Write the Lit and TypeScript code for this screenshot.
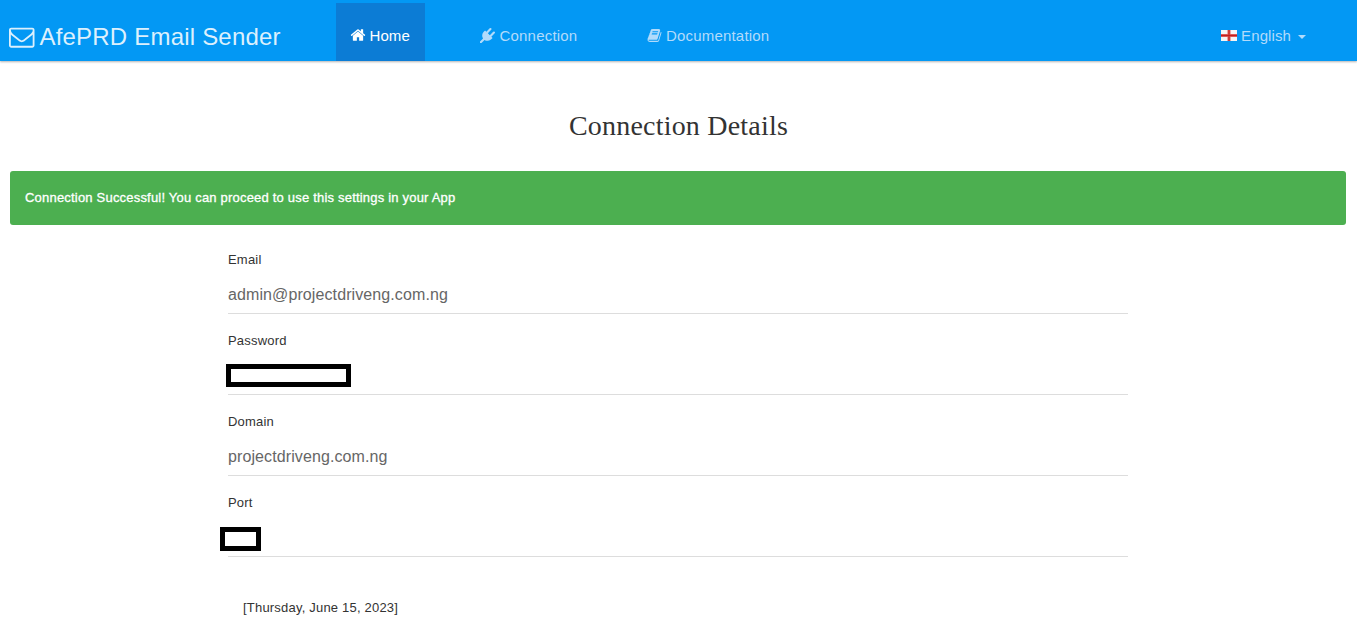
import { LitElement, html, css, svg } from "lit";
import { customElement } from "lit/decorators.js";

const icons = {
  mail: "M1664 1504v-768q-32 36-69 66-268 206-426 338-51 43-83 67t-86.5 48.5-102.5 24.5h-2q-48 0-102.5-24.5t-86.5-48.5-83-67q-158-132-426-338-37-30-69-66v768q0 13 9.5 22.5t22.5 9.5h1472q13 0 22.5-9.5t9.5-22.5zm0-1051v-24.5l-.5-13-3-12.5-5.5-9-9-7.5-14-2.5h-1472q-13 0-22.5 9.5t-9.5 22.5q0 168 147 284 193 152 401 317 6 5 35 29.5t46 37.5 44.5 31.5 50.5 27.5 43 9h2q20 0 43-9t50.5-27.5 44.5-31.5 46-37.5 35-29.5q208-165 401-317 54-43 100.5-115.5t46.5-131.5zm128-37v1088q0 66-47 113t-113 47h-1472q-66 0-113-47t-47-113v-1088q0-66 47-113t113-47h1472q66 0 113 47t47 113z",
  home: "M1472 992v480q0 26-19 45t-45 19h-384v-384h-256v384h-384q-26 0-45-19t-19-45v-480q0-1 .5-3t.5-3l575-474 575 474q1 2 1 6zm223-69l-62 74q-8 9-21 11h-3q-13 0-21-7l-692-577-692 577q-12 8-24 7-13-2-21-11l-62-74q-8-10-7-23.5t11-21.5l719-599q32-26 76-26t76 26l244 204v-195q0-14 9-23t23-9h192q14 0 23 9t9 23v408l219 182q10 8 11 21.5t-7 23.5z",
  plug: "M1755 453q37 38 37 90.5t-37 90.5l-401 400 150 150-160 160q-163 163-389.5 186.5t-411.5-100.5l-362 362h-181v-181l362-362q-124-185-100.5-411.5t186.5-389.5l160-160 150 150 400-401q38-37 91-37t90 37 37 90.5-37 90.5l-400 401 234 234 401-400q38-37 91-37t90 37z",
  book: "M1703 478q40 57 18 129l-275 906q-19 64-76.5 107.5t-122.5 43.5h-923q-77 0-148.5-53.5t-99.5-131.5q-24-67-2-127 0-4 3-27t4-37q1-8-3-21.5t-3-19.5q2-11 8-21t16.5-23.5 16.5-23.5q23-38 45-91.5t30-91.5q3-10 .5-30t-.5-28q3-11 17-28t17-23q21-36 42-92t25-90q1-9-2.5-32t.5-28q4-13 22-30.5t22-22.5q19-26 42.5-84.5t27.5-96.5q1-8-3-25.5t-2-26.5q2-8 9-18t18-23 17-21q8-12 16.5-30.5t15-35 16-36 19.5-32 26.5-23.5 36-11.5 47.5 5.5l-1 3q38-9 51-9h761q74 0 114 56t18 130l-274 906q-36 119-71.5 153.5t-128.5 34.5h-869q-27 0-38 15-11 16-1 43 24 70 144 70h923q29 0 56-15.5t35-41.5l300-987q7-22 5-57 38 15 59 43zm-1064 2q-4 13 2 22.5t20 9.5h608q13 0 25.5-9.5t16.5-22.5l21-64q4-13-2-22.5t-20-9.5h-608q-13 0-25.5 9.5t-16.5 22.5zm-83 256q-4 13 2 22.5t20 9.5h608q13 0 25.5-9.5t16.5-22.5l21-64q4-13-2-22.5t-20-9.5h-608q-13 0-25.5 9.5t-16.5 22.5z",
};

const icon = (name: keyof typeof icons) =>
  html`<svg class="icon ${name}" viewBox="0 0 1792 1792">${svg`<path d=${icons[name]} />`}</svg>`;

@customElement("app-root")
export class AppRoot extends LitElement {
  static styles = css`
    :host {
      display: block;
      height: 630px;
      overflow: hidden;
      background: #fff;
      color: #333;
      font: 13px/24px "Liberation Sans", Arial, sans-serif;
      letter-spacing: 0.2px;
    }
    * { box-sizing: border-box; }
    .navbar {
      display: flex;
      height: 61px;
      padding-top: 3px;
      background: #0398f4;
      box-shadow: 0 1px 2px rgba(0, 0, 0, 0.3);
      color: #b2dbfb;
      font-size: 15px;
      line-height: 23px;
    }
    .brand {
      display: flex;
      align-items: center;
      width: 336px;
      padding: 9px 0 0 9px;
      color: #dcf0fd;
      font-size: 24px;
    }
    .link {
      display: flex;
      align-items: center;
      padding: 6px 15px 0;
      white-space: nowrap;
    }
    .link.active { background: #0c7cd5; color: #fff; width: 89px; padding-left: 14px; letter-spacing: 0.1px; }
    .link.active .icon { width: 16px; height: 16px; margin-right: 3.5px; }
    .link.connection { margin-left: 40px; }
    .link.documentation { margin-left: 40px; }
    .link.documentation .icon { margin-right: 3.5px; }
    .link.language { margin-left: auto; margin-right: 36px; letter-spacing: 0.1px; }
    .icon { flex: none; fill: currentColor; width: 15px; height: 15px; margin-right: 4.5px; }
    .icon.mail { width: 25.5px; height: 25.5px; margin: 0 5px 0 0; }
    .flag { flex: none; width: 16px; height: 11px; margin-right: 4px; }
    .caret {
      margin: 3px 0 0 7px;
      border-top: 4px solid;
      border-left: 4px solid transparent;
      border-right: 4px solid transparent;
    }
    .title {
      margin: 49px 0 0;
      text-align: center;
      font: 400 28px/32px "Liberation Serif", "Times New Roman", serif;
    }
    .alert {
      margin: 29px 11px 0 10px;
      padding: 15px;
      border-radius: 3px;
      background: #4caf50;
      color: #fff;
      -webkit-text-stroke: 0.3px #fff;
    }
    .form { width: 900px; margin: 23px 0 0 228px; }
    .group { margin-bottom: 15px; }
    .label { display: block; margin-bottom: 5px; }
    .value {
      position: relative;
      height: 37px;
      box-shadow: inset 0 -1px 0 #ddd;
      color: #666;
      font-size: 16px;
      line-height: 35px;
      letter-spacing: 0.1px;
    }
    .mask { position: absolute; border: 5px solid #000; background: #fff; }
    .mask.password { left: -2px; top: 6px; width: 125px; height: 23px; }
    .mask.port { left: -8px; top: 7px; width: 41px; height: 24px; }
    .date { margin: 39px 0 0 243px; }
  `;

  private field(label: string, value: unknown) {
    return html`<div class="group"><span class="label">${label}</span><div class="value">${value}</div></div>`;
  }

  render() {
    return html`
      <nav class="navbar">
        <div class="brand">${icon("mail")}<span>AfePRD Email Sender</span></div>
        <div class="link active">${icon("home")}<span>Home</span></div>
        <div class="link connection">${icon("plug")}<span>Connection</span></div>
        <div class="link documentation">${icon("book")}<span>Documentation</span></div>
        <div class="link language">
          <svg class="flag" viewBox="0 0 16 11">
            <rect width="16" height="11" fill="#f5f5f5" />
            <path d="M0 5.5H16M8 0V11" stroke="#dc5a58" stroke-width="3" />
            <path d="M0 5.5H16M8 0V11" stroke="#c2201d" stroke-width="1" />
          </svg>
          <span>English</span><span class="caret"></span>
        </div>
      </nav>
      <h1 class="title">Connection Details</h1>
      <div class="alert">Connection Successful! You can proceed to use this settings in your App</div>
      <div class="form">
        ${this.field("Email", "admin@projectdriveng.com.ng")}
        ${this.field("Password", html`<span class="mask password"></span>`)}
        ${this.field("Domain", "projectdriveng.com.ng")}
        ${this.field("Port", html`<span class="mask port"></span>`)}
      </div>
      <div class="date">[Thursday, June 15, 2023]</div>
    `;
  }
}
